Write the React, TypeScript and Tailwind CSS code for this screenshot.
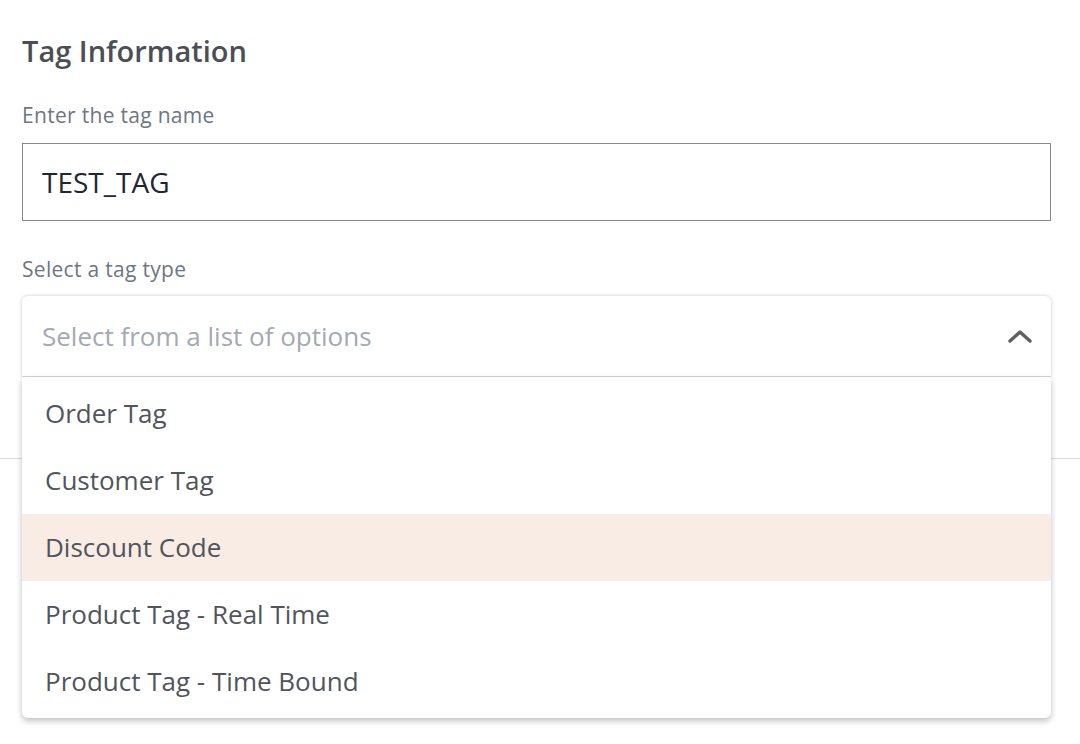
import { useState } from "react";

const options = [
  "Order Tag",
  "Customer Tag",
  "Discount Code",
  "Product Tag - Real Time",
  "Product Tag - Time Bound",
];

export default function App() {
  const [name, setName] = useState("TEST_TAG");
  const [hovered] = useState("Discount Code");

  return (
    <div className="min-h-[744px] w-[1080px] bg-white font-['Open_Sans',sans-serif]">
      <div className="px-[22px] pt-[33px]">
        <h2 className="text-[29px] leading-[36px] font-semibold text-[#4a4f55]">Tag Information</h2>

        <label htmlFor="tag-name" className="mt-[33px] block text-[21px] leading-[26px] tracking-[0.3px] text-[#6b7785]">
          Enter the tag name
        </label>
        <input
          id="tag-name"
          type="text"
          value={name}
          onChange={(e) => setName(e.target.value)}
          className="mt-[15px] block h-[78px] w-[1029px] border border-[#8a8a8a] px-[19px] text-[28px] text-[#1f2733] outline-none"
        />

        <label className="mt-[35px] block text-[21px] leading-[26px] tracking-[0.3px] text-[#6b7785]">Select a tag type</label>

        <div className="relative mt-[14px] w-[1029px]">
          <div className="flex h-[81px] items-center justify-between rounded-t-[6px] border-b border-[#d4d4d4] bg-white px-[20px] shadow-[0_0_4px_rgba(0,0,0,0.2)]">
            <span className="text-[26px] text-[#a3aab2]">Select from a list of options</span>
            <svg width="24" height="14" viewBox="0 0 24 14" className="mr-[-1px]">
              <path d="M2 12 L12 3 L22 12" fill="none" stroke="#5f6062" strokeWidth="3.4" strokeLinecap="round" strokeLinejoin="round" />
            </svg>
          </div>

          {/* open menu */}
          <ul className="absolute left-0 right-0 top-[81px] z-10 rounded-b-[6px] bg-white py-[3px] shadow-[0_3px_6px_rgba(0,0,0,0.25)]">
            {options.map((o) => (
              <li
                key={o}
                className={`flex h-[67px] items-center px-[23px] text-[26px] text-[#50555c] ${
                  o === hovered ? "bg-[#f9ece4]" : ""
                }`}
              >
                {o}
              </li>
            ))}
          </ul>
        </div>
      </div>
      <div className="mt-[81px] border-t border-[#dcdcdc]" />
    </div>
  );
}
